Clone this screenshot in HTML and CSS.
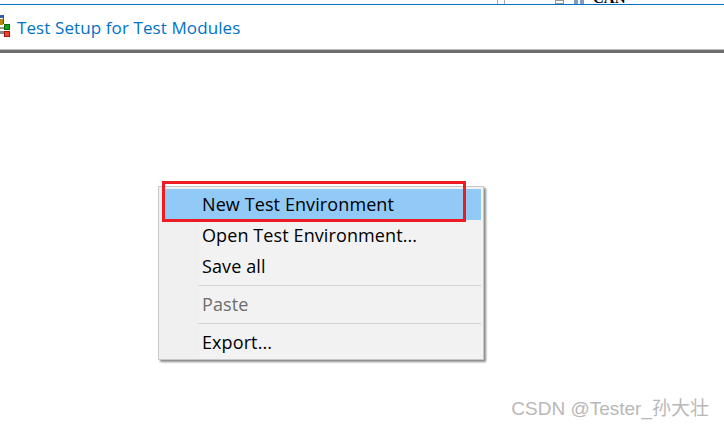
FILE: index.html
```html
<!DOCTYPE html>
<html lang="en">
<head>
    <meta charset="UTF-8">
    <meta name="viewport" content="width=device-width, initial-scale=1.0">
    <title>Test Setup for Test Modules</title>
    <link rel="stylesheet" href="styles.css">
</head>
<body>
    <!-- Cut-off toolbar above the title -->
    <div class="top-strip">
        <span class="frag frag-grip"></span>
        <span class="frag frag-box"></span>
        <span class="frag frag-dots"></span>
        <span class="frag-text">CAN</span>
    </div>

    <header class="title-bar">
        <svg class="title-icon" width="10" height="24" viewBox="0 0 10 24">
            <rect x="0" y="0" width="3" height="3" fill="#3b5fb0"/>
            <rect x="3" y="0" width="1" height="9" fill="#4a4a6a"/>
            <rect x="0" y="4" width="3" height="6" fill="#b8860b"/>
            <rect x="0" y="12" width="4" height="2" fill="#9a9a9a"/>
            <rect x="0" y="16" width="4" height="3" fill="#8a8a8a"/>
            <rect x="4.5" y="9.5" width="5" height="5" fill="#19a019" stroke="#0a6a0a"/>
            <rect x="4.5" y="16.5" width="5" height="5" fill="#f04030" stroke="#b01010"/>
        </svg>
        <span class="title-text">Test Setup for Test Modules</span>
    </header>
    <div class="title-rule"></div>

    <div class="context-menu">
        <div class="menu-item active">New Test Environment</div>
        <div class="menu-item">Open Test Environment...</div>
        <div class="menu-item">Save all</div>
        <div class="menu-sep"></div>
        <div class="menu-item disabled">Paste</div>
        <div class="menu-sep"></div>
        <div class="menu-item">Export...</div>
    </div>
    <div class="red-box"></div>

    <div class="watermark">CSDN @Tester_孙大壮</div>
</body>
</html>
```

FILE: styles.css
```css
html, body {
  margin: 0;
  padding: 0;
}

body {
  width: 724px;
  height: 427px;
  overflow: hidden;
  background: #fff;
  font-family: "Open Sans", "Noto Sans", sans-serif;
  position: relative;
}

/* Top strip */
.top-strip {
  height: 4px;
  border-bottom: 1px solid #0072c6;
  overflow: hidden;
  position: relative;
}

.frag {
  position: absolute;
  top: 0;
  height: 4px;
}

.frag-grip {
  left: 497px;
  width: 8px;
  border-left: 1px solid #aaa;
  border-right: 1px solid #aaa;
  box-sizing: border-box;
}

.frag-box {
  left: 555px;
  width: 9px;
  border: 1px solid #999;
  box-sizing: border-box;
}

.frag-dots {
  left: 574px;
  width: 10px;
  background: linear-gradient(90deg, #7f9fc4 0 4px, transparent 4px 6px, #7f9fc4 6px);
}

.frag-text {
  position: absolute;
  left: 593px;
  top: -10px;
  font-family: "Liberation Serif", serif;
  font-size: 15px;
  line-height: 17px;
  font-weight: bold;
  color: #000;
}

/* Title */
.title-bar {
  height: 44px;
  display: flex;
  align-items: center;
  gap: 7px;
  color: #0072c6;
}

.title-icon {
  flex: none;
}

.title-text {
  font-size: 17px;
  letter-spacing: 0.1px;
}

.title-rule {
  height: 3px;
  background: #6e6e6e;
  border-top: 1px solid #bdbdbd;
}

/* Context menu */
.context-menu {
  position: absolute;
  left: 158px;
  top: 186px;
  width: 326px;
  height: 174px;
  box-sizing: border-box;
  padding: 2px 2px 0 4px;
  background: linear-gradient(90deg, #f0f0f0 0 40px, #f2f2f2 40px);
  border: 1px solid #c8c8c8;
  box-shadow: 2px 2px 2px #8a8a8a;
  font-family: "Open Sans", "Noto Sans", sans-serif;
  font-size: 18px;
  letter-spacing: 0.1px;
}

.menu-item {
  height: 31px;
  line-height: 31px;
  padding-left: 39px;
  color: #000;
}

.menu-item.active {
  background: #91c9f7;
}

.menu-item.disabled {
  color: #6d6d6d;
}

.menu-sep {
  height: 1px;
  margin: 3px 0 3px 35px;
  background: #d4d4d4;
}

.red-box {
  position: absolute;
  left: 162px;
  top: 181px;
  width: 304px;
  height: 41px;
  box-sizing: border-box;
  border: 3px solid #ed1c24;
}

.watermark {
  position: absolute;
  right: 15px;
  top: 398px;
  font-family: "Liberation Sans", "Noto Sans CJK SC", sans-serif;
  font-size: 19px;
  line-height: 22px;
  color: #b8b8b8;
}
```
